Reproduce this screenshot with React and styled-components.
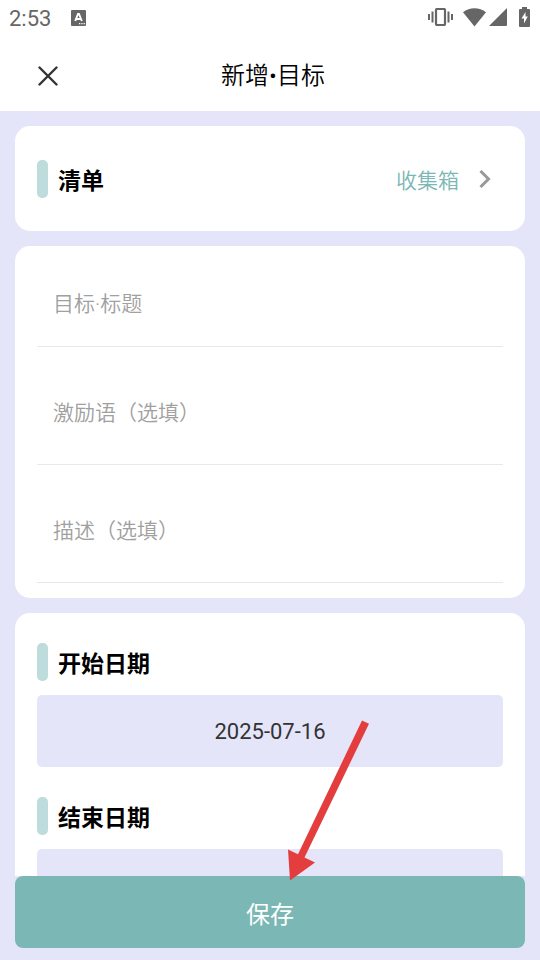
import React, { useState } from "react";
import styled, { createGlobalStyle } from "styled-components";

const GlobalStyle = createGlobalStyle`
  * {
    box-sizing: border-box;
  }

  body {
    margin: 0;
    background-color: #e5e5fa;
  }

  body,
  button,
  input,
  textarea {
    font-family: Roboto, "Noto Sans CJK SC", sans-serif;
  }
`;

const Page = styled.div`
  display: flex;
  flex-direction: column;
  height: 100vh;
  background-color: #e5e5fa;
`;

const StatusBar = styled.div`
  display: flex;
  align-items: center;
  height: 36px;
  padding: 0 10px 0 9px;
  background-color: #fff;
  color: #666;
`;

const Clock = styled.span`
  padding-top: 2px;
  font-size: 22px;
  line-height: 34px;
  margin-right: 20px;
`;

const StatusIcons = styled.div`
  display: flex;
  align-items: center;
  height: 34px;
  margin-left: auto;
  align-self: flex-start;
`;

const Header = styled.header`
  display: grid;
  grid-template-columns: 1fr auto 1fr;
  align-items: center;
  height: 75px;
  padding: 4px 24px 0 30px;
  background-color: #fff;
`;

const CloseButton = styled.button`
  display: flex;
  width: 36px;
  padding: 8px;
  border: none;
  background: none;
  color: #333;
  cursor: pointer;
`;

const PageTitle = styled.h1`
  margin: 0;
  font-size: 24px;
  font-weight: 350;
  line-height: 36px;
  color: #000;
`;

const Content = styled.main`
  flex: 1;
  min-height: 0;
  display: flex;
  flex-direction: column;
  gap: 15px;
  padding: 15px 15px 0;
  overflow-y: auto;
  scrollbar-width: none;
`;

const Card = styled.section`
  flex-shrink: 0;
  padding: ${(props) => props.$padding};
  border-radius: 15px;
  background-color: #fff;
`;

const Row = styled.div`
  display: flex;
  align-items: center;
  justify-content: space-between;
`;

const Label = styled.label`
  display: flex;
  align-items: center;
  gap: 10px;
  height: 38px;
  font-family: "Noto Sans CJK SC", sans-serif;
  font-size: 23px;
  font-weight: 700;
  line-height: 38px;
  color: #000;

  &::before {
    content: "";
    width: 11px;
    height: 38px;
    border-radius: 5px;
    background-color: #bddcdb;
  }
`;

const ListButton = styled.button`
  display: flex;
  align-items: center;
  gap: 20px;
  padding: 0 12px 0 0;
  border: none;
  background: none;
  font-family: "Noto Sans CJK SC", sans-serif;
  font-size: 21px;
  font-weight: 350;
  line-height: 38px;
  color: #7ab7b5;
  cursor: pointer;
`;

const TextField = styled.input`
  display: block;
  width: 100%;
  height: 101px;
  padding: 43px 16px 27px;
  border: none;
  border-bottom: 1px solid #e8e8e8;
  outline: none;
  background: none;
  font-size: 21px;
  font-weight: 350;
  line-height: 30px;
  color: #333;

  &::placeholder {
    color: #a0a0a0;
    opacity: 1;
  }
`;

const TextArea = styled(TextField).attrs({ as: "textarea", rows: 1 })`
  height: 118px;
  padding: 51px 16px 36px;
  resize: none;
  overflow: hidden;
`;

const DateGroup = styled.div`
  & + & {
    margin-top: 30px;
  }
`;

const DateField = styled.input`
  display: block;
  width: 100%;
  height: 72px;
  margin-top: 14px;
  padding: 0 15px;
  border: none;
  border-radius: 5px;
  outline: none;
  background-color: #e5e5fa;
  font-size: 22px;
  text-align: center;
  color: #333;
`;

const Footer = styled.footer`
  position: relative;
  padding: 0 15px 12px;
  background-color: #e5e5fa;
`;

const SaveButton = styled.button`
  display: block;
  width: 100%;
  height: 72px;
  padding: 2px 0 0;
  border: none;
  border-radius: 8px;
  background-color: #7ab7b5;
  font-family: "Noto Sans CJK SC", sans-serif;
  font-size: 24px;
  font-weight: 400;
  line-height: 36px;
  color: #fff;
  cursor: pointer;
`;

// Points at the save button from above
const Pointer = styled.svg`
  position: absolute;
  top: -160px;
  left: 50%;
  pointer-events: none;
`;

const KeyboardIcon = () => (
  <svg width="15" height="16" viewBox="0 0 15 16">
    <rect width="15" height="16" rx="1" fill="currentColor" />
    <path
      d="M4.200 11 7 4h1l2.800 7M5.200 9h4.600"
      fill="none"
      stroke="#fff"
      strokeWidth="1.900"
    />
    <path d="M8 13h1.300v1.300H8zM10.300 13h1.300v1.300h-1.300zM12.600 13h1.300v1.300h-1.300z" fill="#fff" />
  </svg>
);

const VibrateIcon = () => (
  <svg width="25" height="18" viewBox="0 0 25 18" fill="none" stroke="currentColor">
    <rect x="8" y="1" width="9" height="16" rx="1" strokeWidth="2.200" />
    <path d="M1 6v6M24 6v6" strokeWidth="2" />
    <path d="M4.500 3.500v11M20.500 3.500v11" strokeWidth="2" />
  </svg>
);

const WifiIcon = () => (
  <svg width="23" height="19" viewBox="0 0 23 19" style={{ marginLeft: 10 }}>
    <path d="M11.500 18.500 0 4.200C6.500-1.200 16.500-1.200 23 4.200z" fill="currentColor" />
  </svg>
);

const SignalIcon = () => (
  <svg width="18" height="18" viewBox="0 0 18 18" style={{ marginLeft: 3 }}>
    <path d="M18 0v17q0 1-1 1H0z" fill="currentColor" />
  </svg>
);

const BatteryIcon = () => (
  <svg width="11" height="20" viewBox="0 0 11 20" style={{ marginLeft: 12 }}>
    <path
      d="M3 0h5v2h2q1 0 1 1v16q0 1-1 1H1q-1 0-1-1V3q0-1 1-1h2z"
      fill="currentColor"
    />
    <path d="M6.500 5 2.500 11.500H5V16.500L8.800 9.500H6.500z" fill="#fff" />
  </svg>
);

const CloseIcon = () => (
  <svg width="20" height="20" viewBox="0 0 20 20">
    <path
      d="m1.500 1.500 17 17m0-17-17 17"
      stroke="currentColor"
      strokeWidth="2.400"
      strokeLinecap="round"
    />
  </svg>
);

const ChevronIcon = () => (
  <svg width="12" height="18" viewBox="0 0 12 18">
    <path
      d="m1.500 1 8 8-8 8"
      fill="none"
      stroke="#999"
      strokeWidth="3"
    />
  </svg>
);

const App = () => {
  const [title, setTitle] = useState("");
  const [motto, setMotto] = useState("");
  const [description, setDescription] = useState("");

  return (
    <>
      <GlobalStyle />
      <Page>
        <StatusBar>
          <Clock>2:53</Clock>
          <KeyboardIcon />
          <StatusIcons>
            <VibrateIcon />
            <WifiIcon />
            <SignalIcon />
            <BatteryIcon />
          </StatusIcons>
        </StatusBar>

        <Header>
          <CloseButton type="button" aria-label="关闭">
            <CloseIcon />
          </CloseButton>
          <PageTitle>新增•目标</PageTitle>
        </Header>

        <Content>
          {/* List */}
          <Card $padding="34px 22px 33px">
            <Row>
              <Label htmlFor="list">清单</Label>
              <ListButton id="list" type="button">
                收集箱
                <ChevronIcon />
              </ListButton>
            </Row>
          </Card>

          {/* Goal text */}
          <Card $padding="0 22px 15px">
            <TextField
              aria-label="目标标题"
              placeholder="目标·标题"
              value={title}
              onChange={(e) => setTitle(e.target.value)}
            />
            <TextArea
              aria-label="激励语"
              placeholder="激励语（选填）"
              value={motto}
              onChange={(e) => setMotto(e.target.value)}
            />
            <TextArea
              aria-label="描述"
              placeholder="描述（选填）"
              value={description}
              onChange={(e) => setDescription(e.target.value)}
            />
          </Card>

          {/* Dates */}
          <Card $padding="30px 22px">
            <DateGroup>
              <Label htmlFor="start">开始日期</Label>
              <DateField id="start" type="text" value="2025-07-16" readOnly />
            </DateGroup>
            <DateGroup>
              <Label htmlFor="end">结束日期</Label>
              <DateField id="end" type="text" value="2025-07-16" readOnly />
            </DateGroup>
          </Card>
        </Content>

        <Footer>
          <SaveButton type="button">保存</SaveButton>
          <Pointer width="110" height="170" viewBox="0 0 110 170" aria-hidden="true">
            <path
              d="M92 4.500 99 7.800 34.500 141.500 45 146.500 20 164.500 18 133.500 28 138.300z"
              fill="#e43d3d"
            />
          </Pointer>
        </Footer>
      </Page>
    </>
  );
};

export default App;
